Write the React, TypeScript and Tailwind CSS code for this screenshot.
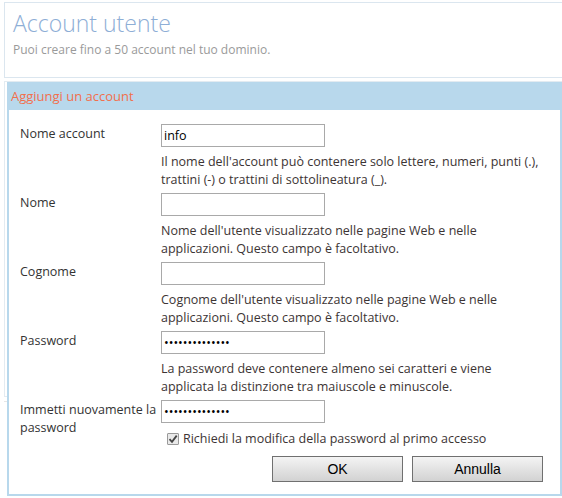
import React from 'react';

const font = { fontFamily: '"Segoe UI", "Open Sans", "Noto Sans", sans-serif' };

type Row = { label: React.ReactNode; value: string; type?: string; help?: React.ReactNode };

const rows: Row[] = [
  {
    label: 'Nome account',
    value: 'info',
    help: (
      <>
        Il nome dell'account può contenere solo lettere, numeri, punti (.),
        <br />
        trattini (-) o trattini di sottolineatura (_).
      </>
    ),
  },
  {
    label: 'Nome',
    value: '',
    help: (
      <>
        Nome dell'utente visualizzato nelle pagine Web e nelle
        <br />
        applicazioni. Questo campo è facoltativo.
      </>
    ),
  },
  {
    label: 'Cognome',
    value: '',
    help: (
      <>
        Cognome dell'utente visualizzato nelle pagine Web e nelle
        <br />
        applicazioni. Questo campo è facoltativo.
      </>
    ),
  },
  {
    label: 'Password',
    value: 'abcdefghijklmn',
    type: 'password',
    help: (
      <>
        La password deve contenere almeno sei caratteri e viene
        <br />
        applicata la distinzione tra maiuscole e minuscole.
      </>
    ),
  },
  {
    label: (
      <>
        Immetti nuovamente la
        <br />
        password
      </>
    ),
    value: 'abcdefghijklmn',
    type: 'password',
  },
];

function FormRow({ row }: { row: Row }) {
  return (
    <div className="flex">
      {/* label may run past the row (two-line label on last row) */}
      <div className="w-[141px] h-[23px] pt-[1px] text-[12.5px] leading-[18px] text-[#333] whitespace-nowrap">
        {row.label}
      </div>
      <div className="flex flex-col">
        <input
          type={row.type ?? 'text'}
          defaultValue={row.value}
          readOnly
          className="w-[164px] h-[23px] border border-[#a9a9a9] px-[2px] text-[12.5px] text-black outline-none bg-white"
          style={font}
        />
        {row.help && (
          <p className="mt-[6px] mb-[4px] h-[36px] text-[12.5px] leading-[18px] text-[#3c3434] whitespace-nowrap">
            {row.help}
          </p>
        )}
      </div>
    </div>
  );
}

export default function App() {
  return (
    <div className="relative w-[562px] h-[498px] overflow-hidden bg-white" style={font}>
      {/* page behind the dialog */}
      <div className="pt-[2px] pl-[4px]">
        <div className="h-[76px] border border-r-0 border-[#dbe6ef] px-[8px] pt-[5px]">
          <h1 className="text-[23px] font-light leading-[30px] text-[#8eaed6]">Account utente</h1>
          <p className="mt-[4px] text-[12px] leading-[16px] text-[#9a9a9a]">
            Puoi creare fino a 50 account nel tuo dominio.
          </p>
        </div>
        <div className="mt-[3px] h-[316px] border border-r-0 border-[#e3ebf1]" />
        <div className="mt-[4px] h-[90px] border-t border-[#e6e6e6]" />
      </div>

      {/* dialog */}
      <div className="absolute left-[7px] top-[82px] w-[555px] h-[414px] border-2 border-t-0 border-[#b8d8ec] bg-white flex flex-col">
        <div className="h-[28px] bg-[#b8d8ec] px-[2px] pt-[5px] text-[13px] leading-[18px] text-[#f26f4c]">
          Aggiungi un account
        </div>
        <div className="pl-[11px] pt-[14px]">
          {rows.map((r, i) => (
            <FormRow key={i} row={r} />
          ))}
          <div className="ml-[147px] mt-[7px] flex items-center gap-[4px] text-[12.5px] leading-[18px] text-[#3c3434]">
            <span className="w-[12px] h-[12px] border border-[#9a9a9a] bg-[#e9e9e9] rounded-[1px] flex items-center justify-center">
              <svg width="10" height="10" viewBox="0 0 10 10">
                <path d="M1.5 5.2 L4 7.8 L8.7 1.6" fill="none" stroke="#444" strokeWidth="1.8" />
              </svg>
            </span>
            Richiedi la modifica della password al primo accesso
          </div>
          <div className="mt-[8px] ml-[252px] flex gap-[9px]">
            {['OK', 'Annulla'].map((t) => (
              <button
                key={t}
                className="w-[131px] h-[26px] border border-[#707070] bg-gradient-to-b from-[#f4f4f4] to-[#d2d2d2] text-[14px] text-black"
                style={{ fontFamily: '"Liberation Sans", Arial, sans-serif' }}
              >
                {t}
              </button>
            ))}
          </div>
        </div>
      </div>
    </div>
  );
}
